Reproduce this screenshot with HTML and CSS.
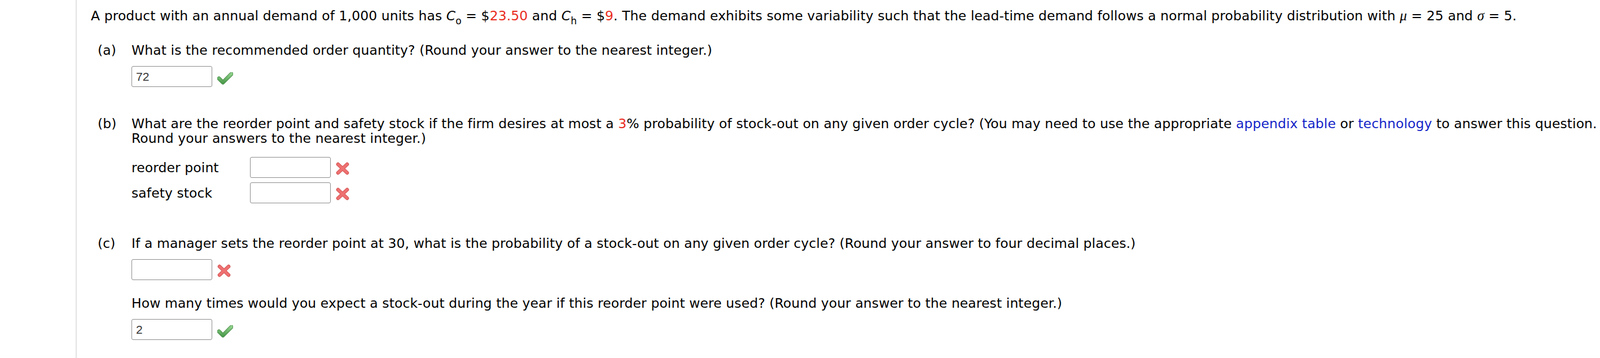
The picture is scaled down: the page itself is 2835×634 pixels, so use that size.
FILE: index.html
```html
<!DOCTYPE html>
<html lang="en">
<head>
<meta charset="utf-8">
<title>Inventory question</title>
<link rel="stylesheet" href="styles.css">
</head>
<body>
<div class="page">
  <p class="intro">A product with an annual demand of 1,000 units has <i class="var">C</i><sub class="sub">o</sub> = $<span class="red">23.50</span> and <i class="var">C</i><sub class="sub">h</sub> = $<span class="red">9</span>. The demand exhibits some variability such that the lead-time demand follows a normal probability distribution with <i class="greek">μ</i> = 25 and <i class="greek">σ</i> = 5.</p>

  <div class="part part-a">
    <span class="lbl">(a)</span>
    <div class="body">
      <p class="qt">What is the recommended order quantity? (Round your answer to the nearest integer.)</p>
      <div class="ans">
        <input class="field" type="text" value="72" readonly>
        <svg class="ok" width="28" height="22" viewBox="0 0 28 22"><defs><linearGradient id="g1" x1="0" y1="0" x2="0" y2="1"><stop offset="0" stop-color="#8fd08a"/><stop offset="1" stop-color="#4e9d4e"/></linearGradient></defs><path d="M3 11 L10 18 L25 3" fill="none" stroke="#4b8f4b" stroke-width="7" stroke-linejoin="round" stroke-linecap="round"/><path d="M3 11 L10 18 L25 3" fill="none" stroke="url(#g1)" stroke-width="5" stroke-linejoin="round" stroke-linecap="round"/></svg>
      </div>
    </div>
  </div>

  <div class="part part-b">
    <span class="lbl">(b)</span>
    <div class="body">
      <p class="qt">What are the reorder point and safety stock if the firm desires at most a <span class="red">3</span>% probability of stock-out on any given order cycle? (You may need to use the appropriate <a class="link" href="#">appendix table</a> or <a class="link" href="#">technology</a> to answer this question.<br>Round your answers to the nearest integer.)</p>
      <div class="rows">
        <div class="row">
          <span class="rlbl">reorder point</span>
          <input class="field" type="text" value="" readonly>
          <svg class="bad" width="24" height="23" viewBox="0 0 24 23"><path d="M4 4 L20 19 M20 4 L4 19" fill="none" stroke="#d24e4e" stroke-width="6.5" stroke-linecap="round"/><path d="M4 4 L20 19 M20 4 L4 19" fill="none" stroke="#ee7171" stroke-width="4.5" stroke-linecap="round"/></svg>
        </div>
        <div class="row">
          <span class="rlbl">safety stock</span>
          <input class="field" type="text" value="" readonly>
          <svg class="bad" width="24" height="23" viewBox="0 0 24 23"><path d="M4 4 L20 19 M20 4 L4 19" fill="none" stroke="#d24e4e" stroke-width="6.5" stroke-linecap="round"/><path d="M4 4 L20 19 M20 4 L4 19" fill="none" stroke="#ee7171" stroke-width="4.5" stroke-linecap="round"/></svg>
        </div>
      </div>
    </div>
  </div>

  <div class="part part-c">
    <span class="lbl">(c)</span>
    <div class="body">
      <p class="qt">If a manager sets the reorder point at 30, what is the probability of a stock-out on any given order cycle? (Round your answer to four decimal places.)</p>
      <div class="ans">
        <input class="field" type="text" value="" readonly>
        <svg class="bad" width="24" height="23" viewBox="0 0 24 23"><path d="M4 4 L20 19 M20 4 L4 19" fill="none" stroke="#d24e4e" stroke-width="6.5" stroke-linecap="round"/><path d="M4 4 L20 19 M20 4 L4 19" fill="none" stroke="#ee7171" stroke-width="4.5" stroke-linecap="round"/></svg>
      </div>
      <p class="qt qt-follow">How many times would you expect a stock-out during the year if this reorder point were used? (Round your answer to the nearest integer.)</p>
      <div class="ans">
        <input class="field" type="text" value="2" readonly>
        <svg class="ok" width="28" height="22" viewBox="0 0 28 22"><defs><linearGradient id="g2" x1="0" y1="0" x2="0" y2="1"><stop offset="0" stop-color="#8fd08a"/><stop offset="1" stop-color="#4e9d4e"/></linearGradient></defs><path d="M3 11 L10 18 L25 3" fill="none" stroke="#4b8f4b" stroke-width="7" stroke-linejoin="round" stroke-linecap="round"/><path d="M3 11 L10 18 L25 3" fill="none" stroke="url(#g2)" stroke-width="5" stroke-linejoin="round" stroke-linecap="round"/></svg>
      </div>
    </div>
  </div>
</div>
</body>
</html>
```

FILE: styles.css
```css
html, body {
  margin: 0;
  padding: 0;
  background: #ffffff;
}

body {
  font-family: "DejaVu Sans", Verdana, sans-serif;
  font-size: 23.4px;
  line-height: 26px;
  letter-spacing: 0.13px;
  color: #000000;
}

.page {
  margin-left: 134px;
  border-left: 2px solid #e2e2e2;
  padding: 15px 0 0 25px;
  min-height: 619px;
  white-space: nowrap;
}

.intro {
  margin: 0;
}

.var {
  font-style: italic;
}

.sub {
  font-size: 17px;
  vertical-align: -7px;
  line-height: 0;
}

.greek {
  font-family: "Liberation Serif", "Times New Roman", serif;
  font-style: italic;
  font-size: 25px;
}

.red {
  color: #e92b1e;
}

.link {
  color: #1425c8;
  text-decoration: none;
}

.part {
  display: grid;
  grid-template-columns: 60px auto;
  margin-left: 12px;
}

.part-a {
  margin-top: 35px;
}

.part-b {
  margin-top: 52px;
}

.part-c {
  margin-top: 58px;
}

.lbl {
  display: block;
}

.qt {
  margin: 0;
}

.qt-follow {
  margin-top: 28px;
}

.ans {
  display: flex;
  align-items: center;
  gap: 9px;
  margin-top: 15px;
}

.field {
  box-sizing: border-box;
  width: 143px;
  height: 37px;
  margin: 0;
  padding: 0 7px;
  border: 1px solid #8c8c8c;
  border-radius: 3px;
  font-family: "Liberation Sans", Arial, sans-serif;
  font-size: 21px;
  letter-spacing: 0;
  color: #333333;
  background: #ffffff;
  outline: none;
}

.ok {
  margin-top: 6px;
}

.bad {
  margin-top: 4px;
}

.rows {
  display: flex;
  flex-direction: column;
  gap: 8px;
  margin-top: 20px;
}

.row {
  display: grid;
  grid-template-columns: 201px 143px auto;
  column-gap: 9px;
  align-items: center;
}
```
